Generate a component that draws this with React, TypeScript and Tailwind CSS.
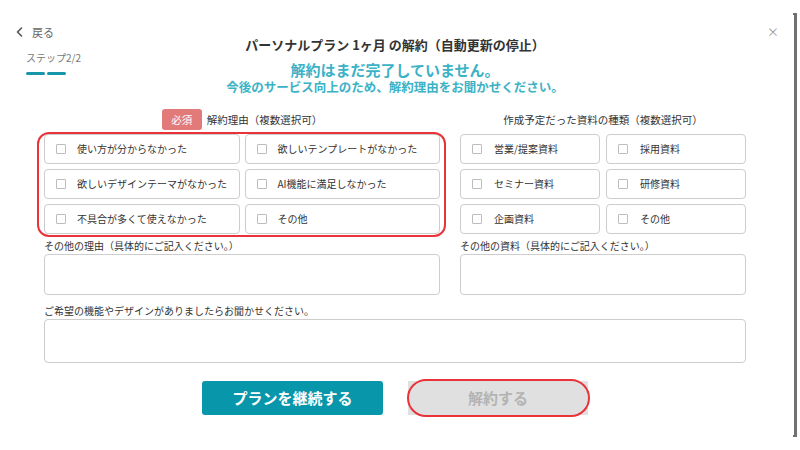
import React from 'react';

const reasons = [
  '使い方が分からなかった',
  '欲しいテンプレートがなかった',
  '欲しいデザインテーマがなかった',
  'AI機能に満足しなかった',
  '不具合が多くて使えなかった',
  'その他',
];

const docTypes = ['営業/提案資料', '採用資料', 'セミナー資料', '研修資料', '企画資料', 'その他'];

const Option = ({ label, gap }: { label: string; gap: string }) => (
  <label className={`flex items-center h-[30px] pl-[11px] ${gap} border border-[#cdcdcd] rounded-[4px] bg-white text-[10px] text-[#333] cursor-pointer`}>
    <span className="w-[10px] h-[10px] border border-[#bdbdbd] rounded-[1px] bg-white shrink-0" />
    <span className="leading-none">{label}</span>
  </label>
);

const App = () => {
  return (
    <div
      className="w-[800px] h-[450px] relative bg-white overflow-hidden"
      style={{ fontFamily: '"Noto Sans CJK JP", "Noto Sans", sans-serif' }}
    >
      {/* right edge bracket */}
      <div className="absolute right-[3px] top-[13px] bottom-[13px] w-[4px] border-r-[3px] border-t-2 border-b-2 border-[#707070]" />

      <div className="w-[790px]">
        {/* Header */}
        <header className="grid grid-cols-[1fr_auto_1fr] pt-[24px]">
          <div className="pl-[16px]">
            <button className="flex items-center gap-[9px] h-[16px] text-[11px] text-[#666]">
              <svg width="7" height="10" viewBox="0 0 7 10" fill="none">
                <path d="M5.5 1 L1.5 5 L5.5 9" stroke="#555" strokeWidth="1.6" strokeLinecap="round" strokeLinejoin="round" />
              </svg>
              <span className="leading-[16px]">戻る</span>
            </button>
            <div className="ml-[10px] mt-[11px] text-[10px] leading-[14px] text-[#777]">ステップ2/2</div>
            <div className="ml-[10px] mt-[7px] flex gap-[2px]">
              <span className="w-[19px] h-[3px] rounded-full bg-[#1796a9]" />
              <span className="w-[19px] h-[3px] rounded-full bg-[#1796a9]" />
            </div>
          </div>

          <div className="pt-[12px] text-center">
            <h1 className="text-[13px] leading-[18px] font-bold text-[#333]">
              パーソナルプラン 1ヶ月 の解約（自動更新の停止）
            </h1>
            <p className="mt-[6px] text-[15px] leading-[19px] font-bold text-[#3bb2c6]">解約はまだ完了していません。</p>
            <p className="text-[12.5px] leading-[16px] font-bold text-[#3bb2c6]">
              今後のサービス向上のため、解約理由をお聞かせください。
            </p>
          </div>

          <div className="flex justify-end pr-[11px]">
            <span className="text-[12px] leading-[16px] text-[#9a9a9a]">×</span>
          </div>
        </header>

        {/* Body */}
        <div className="px-[44px] mt-[14px]">
          <div className="flex gap-[20px]">
            <div className="w-[396px]">
              <div className="flex items-center justify-center gap-[5px] h-[21px]">
                <span className="w-[40px] h-[21px] flex items-center justify-center rounded-[3px] bg-[#e27a7a] text-white text-[10.5px]">
                  必須
                </span>
                <span className="text-[10.5px] text-[#333]">解約理由（複数選択可）</span>
              </div>
              <div className="relative mt-[4px]">
                <div className="grid grid-cols-2 gap-[5px]">
                  {reasons.map((r) => (
                    <Option key={r} label={r} gap="gap-[11px]" />
                  ))}
                </div>
                <div className="absolute -left-[7px] -right-[6px] -top-[2px] -bottom-[3px] rounded-[12px] border-2 border-[#ea3339] pointer-events-none" />
              </div>
              <div className="mt-[5px] text-[10px] leading-[14px] text-[#333]">その他の理由（具体的にご記入ください。）</div>
              <textarea className="mt-[1px] block w-full h-[41px] border border-[#cdcdcd] rounded-[4px] resize-none" />
            </div>

            <div className="w-[286px]">
              <div className="flex items-center justify-center h-[21px]">
                <span className="text-[10.5px] text-[#333]">作成予定だった資料の種類（複数選択可）</span>
              </div>
              <div className="mt-[4px] grid grid-cols-2 gap-x-[6px] gap-y-[5px]">
                {docTypes.map((d) => (
                  <Option key={d} label={d} gap="gap-[12px]" />
                ))}
              </div>
              <div className="mt-[5px] text-[10px] leading-[14px] text-[#333]">その他の資料（具体的にご記入ください。）</div>
              <textarea className="mt-[1px] block w-full h-[41px] border border-[#cdcdcd] rounded-[4px] resize-none" />
            </div>
          </div>

          <div className="mt-[9px] text-[10px] leading-[14px] text-[#333]">ご希望の機能やデザインがありましたらお聞かせください。</div>
          <textarea className="mt-[1px] block w-full h-[44px] border border-[#cdcdcd] rounded-[4px] resize-none" />

          <div className="mt-[18px] flex justify-center gap-[25px]">
            <button className="w-[181px] h-[34px] rounded-[3px] bg-[#0897aa] text-white text-[15px] font-bold">
              プランを継続する
            </button>
            <div className="relative">
              <button disabled className="w-[180px] h-[34px] bg-[#e0e0e0] text-[#b3b3b3] text-[15px] font-bold">
                解約する
              </button>
              <div className="absolute -left-[1px] -right-[2px] -top-[2px] -bottom-[2px] rounded-full border-2 border-[#ea3339] pointer-events-none" />
            </div>
          </div>
        </div>
      </div>
    </div>
  );
};

export default App;
